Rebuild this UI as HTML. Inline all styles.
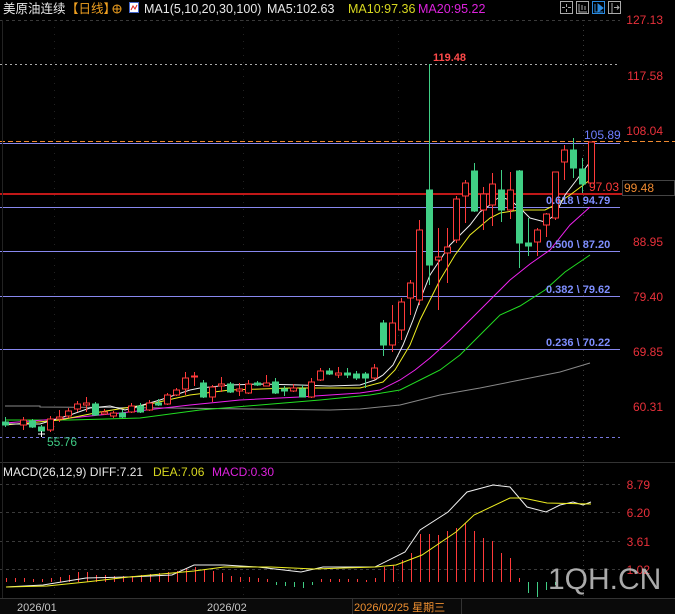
<!DOCTYPE html>
<html><head><meta charset="utf-8"><style>
html,body{margin:0;padding:0;background:#000;}
body{width:675px;height:614px;overflow:hidden;position:relative;font-family:"Liberation Sans","Noto Sans CJK SC",sans-serif;}
svg{position:absolute;left:0;top:0;}
text{font-family:"Liberation Sans","Noto Sans CJK SC",sans-serif;}
</style></head><body>
<svg width="675" height="614" viewBox="0 0 675 614" xmlns="http://www.w3.org/2000/svg">
<rect width="675" height="614" fill="#000"/>
<g stroke="#3a3a3a" stroke-width="1" stroke-dasharray="3,3">
<line x1="0" y1="20.5" x2="620" y2="20.5"/>
<line x1="0" y1="437.5" x2="620" y2="437.5" stroke="#7777dd"/>
<line x1="0" y1="484.5" x2="620" y2="484.5"/>
<line x1="0" y1="512.5" x2="620" y2="512.5"/>
<line x1="0" y1="541.5" x2="620" y2="541.5"/>
<line x1="0" y1="569.5" x2="620" y2="569.5"/>
<line x1="583.5" y1="20" x2="583.5" y2="598" stroke-dasharray="1,4"/>
<line x1="54.5" y1="20" x2="54.5" y2="598" stroke-dasharray="1,6" stroke="#222"/>
<line x1="243.5" y1="20" x2="243.5" y2="598" stroke-dasharray="1,6" stroke="#222"/>
<line x1="398.5" y1="20" x2="398.5" y2="598" stroke-dasharray="1,6" stroke="#222"/>
</g>
<line x1="0" y1="64.5" x2="620" y2="64.5" stroke="#aaa" stroke-dasharray="2,3"/>
<line x1="0" y1="141.5" x2="675" y2="141.5" stroke="#f08a30" stroke-dasharray="5,3"/>
<line x1="0" y1="143.5" x2="620" y2="143.5" stroke="#8888ee"/>
<line x1="0" y1="194" x2="675" y2="194" stroke="#ff2020" stroke-width="1.5"/>
<g stroke="#8888ee"><line x1="0" y1="207.5" x2="620" y2="207.5"/><line x1="0" y1="251.5" x2="620" y2="251.5"/><line x1="0" y1="296.5" x2="620" y2="296.5"/><line x1="0" y1="349.5" x2="620" y2="349.5"/></g>
<line x1="0" y1="462.5" x2="675" y2="462.5" stroke="#333"/>
<line x1="2.5" y1="20" x2="2.5" y2="598" stroke="#222"/>

<g fill="none" stroke-width="1">
<polyline stroke="#888" points="5,406 40,406 40,407 170,408 330,410 360,409 400,405 440,395 480,388 520,380 560,372 590,363"/>
<polyline stroke="#22dd22" points="5,420 70,420 140,418 200,410 260,405 320,400 370,395 400,390 420,380 440,370 460,355 480,335 500,315 520,306 545,290 565,272 590,255"/>
<polyline stroke="#ee22ee" points="5,423 70,418 120,413 190,405 240,400 300,397 360,393 380,390 400,380 415,370 430,358 450,340 470,320 490,300 510,280 530,264 550,250 570,225 590,207"/>
<polyline stroke="#eeee22" points="5,425 60,420 100,412 150,404 190,395 230,390 290,388 360,388 383,382 395,370 410,345 420,320 440,280 455,255 470,235 490,218 500,213 520,210 545,210 555,205 570,195 590,180"/>
<polyline stroke="#f0f0f0" points="5,424 40,424 70,415 90,408 110,406 125,410 160,400 190,390 200,388 230,385 260,384 300,385 330,386 360,385 375,380 383,375 393,365 403,345 413,320 420,300 430,275 440,260 450,245 460,235 470,225 480,212 490,205 495,200 500,197 510,200 520,208 530,218 545,222 555,215 565,195 575,182 590,162"/>
</g>

<g stroke-width="1">
<g stroke="#40cf85" fill="#40cf85">
<line x1="5.5" y1="417" x2="5.5" y2="427"/><rect x="2.5" y="422" width="6" height="3"/>
<line x1="32.5" y1="419" x2="32.5" y2="428"/><rect x="29.5" y="421" width="6" height="6"/>
<line x1="41.5" y1="425" x2="41.5" y2="435"/><rect x="38.5" y="427" width="6" height="4"/>
<line x1="95.5" y1="402" x2="95.5" y2="416"/><rect x="92.5" y="404" width="6" height="11"/>
<line x1="122.5" y1="410" x2="122.5" y2="418"/><rect x="119.5" y="413" width="6" height="4"/>
<line x1="140.5" y1="403" x2="140.5" y2="413"/><rect x="137.5" y="406" width="6" height="6"/>
<line x1="158.5" y1="399" x2="158.5" y2="406"/><rect x="155.5" y="403" width="6" height="2"/>
<line x1="203.5" y1="380" x2="203.5" y2="398"/><rect x="200.5" y="383" width="6" height="14"/>
<line x1="230.5" y1="382" x2="230.5" y2="393"/><rect x="227.5" y="384" width="6" height="8"/>
<line x1="257.5" y1="381" x2="257.5" y2="386"/><rect x="254.5" y="383" width="6" height="2"/>
<line x1="275.5" y1="378" x2="275.5" y2="394"/><rect x="272.5" y="382" width="6" height="11"/>
<line x1="284.5" y1="386" x2="284.5" y2="396"/><rect x="281.5" y="389" width="6" height="2"/>
<line x1="302.5" y1="385" x2="302.5" y2="397"/><rect x="299.5" y="389" width="6" height="8"/>
<line x1="329.5" y1="368" x2="329.5" y2="375"/><rect x="326.5" y="371" width="6" height="3"/>
<line x1="347.5" y1="368" x2="347.5" y2="378"/><rect x="344.5" y="373" width="6" height="2"/>
<line x1="356.5" y1="371" x2="356.5" y2="380"/><rect x="353.5" y="374" width="6" height="4"/>
<line x1="365.5" y1="372" x2="365.5" y2="388"/><rect x="362.5" y="374" width="6" height="4"/>
<line x1="383.5" y1="320" x2="383.5" y2="356"/><rect x="380.5" y="323" width="6" height="22"/>
<line x1="429.5" y1="64" x2="429.5" y2="285"/><rect x="426.5" y="190" width="6" height="75"/>
<line x1="474.5" y1="163" x2="474.5" y2="212"/><rect x="471.5" y="171" width="6" height="40"/>
<line x1="501.5" y1="170" x2="501.5" y2="222"/><rect x="498.5" y="190" width="6" height="20"/>
<line x1="519.5" y1="170" x2="519.5" y2="268"/><rect x="516.5" y="171" width="6" height="72"/>
<line x1="528.5" y1="218" x2="528.5" y2="256"/><rect x="525.5" y="243" width="6" height="3"/>
<line x1="573.5" y1="138" x2="573.5" y2="178"/><rect x="570.5" y="150" width="6" height="18"/>
<line x1="582.5" y1="158" x2="582.5" y2="193"/><rect x="579.5" y="169" width="6" height="15"/>
</g>
<g stroke="#ff3a3a" fill="#000">
<line x1="23.5" y1="417" x2="23.5" y2="430"/><rect x="20.5" y="420" width="6" height="5"/>
<line x1="50.5" y1="416" x2="50.5" y2="432"/><rect x="47.5" y="419" width="6" height="11"/>
<line x1="59.5" y1="410" x2="59.5" y2="422"/><rect x="56.5" y="417" width="6" height="2"/>
<line x1="68.5" y1="408" x2="68.5" y2="418"/><rect x="65.5" y="411" width="6" height="5"/>
<line x1="77.5" y1="401" x2="77.5" y2="412"/><rect x="74.5" y="404" width="6" height="5"/>
<line x1="86.5" y1="397" x2="86.5" y2="412"/><rect x="83.5" y="403" width="6" height="2"/>
<line x1="104.5" y1="409" x2="104.5" y2="415"/><rect x="101.5" y="412" width="6" height="2"/>
<line x1="113.5" y1="411" x2="113.5" y2="418"/><rect x="110.5" y="413" width="6" height="3"/>
<line x1="131.5" y1="403" x2="131.5" y2="413"/><rect x="128.5" y="406" width="6" height="6"/>
<line x1="149.5" y1="400" x2="149.5" y2="411"/><rect x="146.5" y="403" width="6" height="7"/>
<line x1="167.5" y1="393" x2="167.5" y2="405"/><rect x="164.5" y="395" width="6" height="9"/>
<line x1="176.5" y1="388" x2="176.5" y2="396"/><rect x="173.5" y="390" width="6" height="5"/>
<line x1="185.5" y1="372" x2="185.5" y2="395"/><rect x="182.5" y="378" width="6" height="11"/>
<line x1="194.5" y1="372" x2="194.5" y2="386"/><rect x="191.5" y="376" width="6" height="1"/>
<line x1="212.5" y1="385" x2="212.5" y2="402"/><rect x="209.5" y="387" width="6" height="10"/>
<line x1="221.5" y1="377" x2="221.5" y2="392"/><rect x="218.5" y="384" width="6" height="2"/>
<line x1="239.5" y1="383" x2="239.5" y2="396"/><rect x="236.5" y="389" width="6" height="2"/>
<line x1="248.5" y1="380" x2="248.5" y2="394"/><rect x="245.5" y="384" width="6" height="9"/>
<line x1="266.5" y1="375" x2="266.5" y2="386"/><rect x="263.5" y="383" width="6" height="3"/>
<line x1="293.5" y1="384" x2="293.5" y2="392"/><rect x="290.5" y="388" width="6" height="3"/>
<line x1="311.5" y1="378" x2="311.5" y2="398"/><rect x="308.5" y="382" width="6" height="15"/>
<line x1="320.5" y1="368" x2="320.5" y2="381"/><rect x="317.5" y="371" width="6" height="9"/>
<line x1="338.5" y1="367" x2="338.5" y2="378"/><rect x="335.5" y="373" width="6" height="2"/>
<line x1="374.5" y1="364" x2="374.5" y2="380"/><rect x="371.5" y="368" width="6" height="10"/>
<line x1="392.5" y1="305" x2="392.5" y2="352"/><rect x="389.5" y="323" width="6" height="22"/>
<line x1="401.5" y1="298" x2="401.5" y2="340"/><rect x="398.5" y="302" width="6" height="28"/>
<line x1="410.5" y1="280" x2="410.5" y2="315"/><rect x="407.5" y="283" width="6" height="15"/>
<line x1="419.5" y1="220" x2="419.5" y2="305"/><rect x="416.5" y="230" width="6" height="70"/>
<line x1="438.5" y1="228" x2="438.5" y2="310"/><rect x="435.5" y="257" width="6" height="3"/>
<line x1="447.5" y1="228" x2="447.5" y2="283"/><rect x="444.5" y="247" width="6" height="6"/>
<line x1="456.5" y1="196" x2="456.5" y2="243"/><rect x="453.5" y="199" width="6" height="41"/>
<line x1="465.5" y1="180" x2="465.5" y2="223"/><rect x="462.5" y="183" width="6" height="13"/>
<line x1="483.5" y1="187" x2="483.5" y2="230"/><rect x="480.5" y="194" width="6" height="16"/>
<line x1="492.5" y1="173" x2="492.5" y2="226"/><rect x="489.5" y="184" width="6" height="21"/>
<line x1="510.5" y1="172" x2="510.5" y2="219"/><rect x="507.5" y="190" width="6" height="20"/>
<line x1="537.5" y1="228" x2="537.5" y2="256"/><rect x="534.5" y="230" width="6" height="12"/>
<line x1="546.5" y1="213" x2="546.5" y2="237"/><rect x="543.5" y="214" width="6" height="11"/>
<line x1="555.5" y1="172" x2="555.5" y2="220"/><rect x="552.5" y="172" width="6" height="46"/>
<line x1="564.5" y1="145" x2="564.5" y2="180"/><rect x="561.5" y="150" width="6" height="12"/>
<rect x="588.5" y="142" width="6" height="41"/>
</g>
</g>
<line x1="38" y1="434" x2="45" y2="434" stroke="#fff"/><line x1="41.5" y1="431" x2="41.5" y2="437" stroke="#fff"/>

<g font-size="11" font-weight="bold">
<text x="433" y="61" fill="#ff4a4a">119.48</text>
<text x="584" y="139" fill="#6f7fff" font-size="12" font-weight="normal">105.89</text>
<text x="589" y="191" fill="#ff3a3a" font-size="12" font-weight="normal">97.03</text>
<text x="546" y="204" fill="#7f8fff">0.618 \ 94.79</text>
<text x="546" y="248" fill="#7f8fff">0.500 \ 87.20</text>
<text x="546" y="293" fill="#7f8fff">0.382 \ 79.62</text>
<text x="546" y="346" fill="#7f8fff">0.236 \ 70.22</text>
<text x="47" y="446" fill="#3ec882" font-size="12" font-weight="normal">55.76</text>
</g>

<g font-size="12" fill="#e8303a" text-anchor="end">
<text x="663" y="24">127.13</text>
<text x="663" y="80">117.58</text>
<text x="663" y="135">108.04</text>
<text x="663" y="246">88.95</text>
<text x="663" y="301">79.40</text>
<text x="663" y="356">69.85</text>
<text x="663" y="411">60.31</text>
<text x="650" y="489">8.79</text>
<text x="650" y="517">6.20</text>
<text x="650" y="546">3.61</text>
<text x="650" y="574">1.02</text>
</g>
<rect x="622.5" y="180.5" width="52" height="15" fill="#000" stroke="#444"/>
<text x="624" y="192" font-size="12" fill="#f08a30">99.48</text>

<text x="3" y="13" font-size="12.5" fill="#e8e8e8">美原油连续</text>
<text x="66" y="13" font-size="12.5" fill="#f0a020">【日线】</text>
<circle cx="117" cy="9" r="4" fill="none" stroke="#f0a020"/><line x1="113" y1="9" x2="121" y2="9" stroke="#f0a020"/><line x1="117" y1="5" x2="117" y2="13" stroke="#f0a020"/>
<rect x="129.5" y="2.5" width="9" height="10" fill="#fff" stroke="#4466cc"/><polyline points="131,10 133,6 135,9 137,5" fill="none" stroke="#dd2222"/>
<text x="144" y="13" font-size="12.5" fill="#e8e8e8">MA1(5,10,20,30,100)</text>
<text x="267" y="13" font-size="12.5" fill="#e8e8e8">MA5:102.63</text>
<text x="348" y="13" font-size="12.5" fill="#d8d820">MA10:97.36</text>
<text x="418" y="13" font-size="12.5" fill="#dd22dd">MA20:95.22</text>
<g fill="none" stroke="#aaa">
<rect x="560.5" y="1.5" width="12" height="12"/><rect x="576.5" y="1.5" width="12" height="12"/><rect x="592.5" y="1.5" width="12" height="12" stroke="#2a8ae0"/><rect x="608.5" y="1.5" width="12" height="12"/>
<path d="M566.5 4v3M566.5 9v3M562 7.5h3M568 7.5h3"/>
<path d="M579 4v8h8M582 5v5M585 6v4"/>
<path d="M595 4v8h8" stroke="#2a8ae0"/><path d="M598 4l5 4l-5 4z" fill="#2a8ae0" stroke="#2a8ae0"/>
<path d="M612 3v10M614 7.5h5M617 5.5l2 2l-2 2"/>
</g>

<text x="3" y="476" font-size="12" fill="#e8e8e8">MACD(26,12,9) DIFF:7.21</text>
<text x="153" y="476" font-size="12" fill="#d8d820">DEA:7.06</text>
<text x="212" y="476" font-size="12" fill="#dd22dd">MACD:0.30</text>
<g stroke="#ff3a3a" stroke-width="1">
<path d="M6.5 582v-4M15.5 582v-4M24.5 582v-4M33.5 582v-3M42.5 582v-3M51.5 582v-4M60.5 582v-5M69.5 582v-7M78.5 582v-10M87.5 582v-10M96.5 582v-7M105.5 582v-7M114.5 582v-6M123.5 582v-6M132.5 582v-6M141.5 582v-7M150.5 582v-8M159.5 582v-9M168.5 582v-10M177.5 582v-11M186.5 582v-13M195.5 582v-15M204.5 582v-12M213.5 582v-11M222.5 582v-9M231.5 582v-6M240.5 582v-5M249.5 582v-5M258.5 582v-4M267.5 582v-3"/>
<path d="M321.5 582v-3M330.5 582v-3M339.5 582v-3M348.5 582v-3M357.5 582v-3M366.5 582v-2M375.5 582v-4M384.5 582v-15M393.5 582v-17M402.5 582v-22M411.5 582v-29M420.5 582v-48M429.5 582v-48M438.5 582v-47M447.5 582v-51M456.5 582v-54M465.5 582v-59M474.5 582v-51M483.5 582v-44M492.5 582v-41M501.5 582v-29M510.5 582v-24M519.5 582v-4"/>
</g>
<g stroke="#40cf85">
<path d="M276.5 582v3M285.5 582v4M294.5 582v5M303.5 582v6M312.5 582v3M528.5 582v11M537.5 582v15M546.5 582v8M555.5 582v3"/>
</g>
<polyline fill="none" stroke="#f0f0f0" points="6,587 43,585 86,578 129,577 172,575 194,565 224,565 258,567 301,572 323,567 375,567 405,552 420,530 448,512 467,492 493,485 510,487 527,507 546,512 560,505 573,502 583,505 591,502"/>
<polyline fill="none" stroke="#eeee22" points="6,587 47,586 86,582 129,577 194,571 224,567 271,567 314,569 375,567 396,565 422,555 456,532 474,515 510,498 523,498 547,503 591,504"/>

<text x="548" y="589" font-size="30" fill="#c8c8c8" opacity="0.85">1QH.CN</text>

<rect x="0" y="598" width="675" height="16" fill="#0a0a0a"/>
<line x1="0" y1="598.5" x2="675" y2="598.5" stroke="#333"/>
<line x1="352.5" y1="598" x2="352.5" y2="614" stroke="#333"/><line x1="461.5" y1="598" x2="461.5" y2="614" stroke="#333"/>
<text x="17" y="611" font-size="11" fill="#c8c8c8">2026/01</text>
<text x="207" y="611" font-size="11" fill="#c8c8c8">2026/02</text>
<text x="354" y="611" font-size="11" fill="#f09030">2026/02/25 星期三</text>
</svg>
</body></html>
